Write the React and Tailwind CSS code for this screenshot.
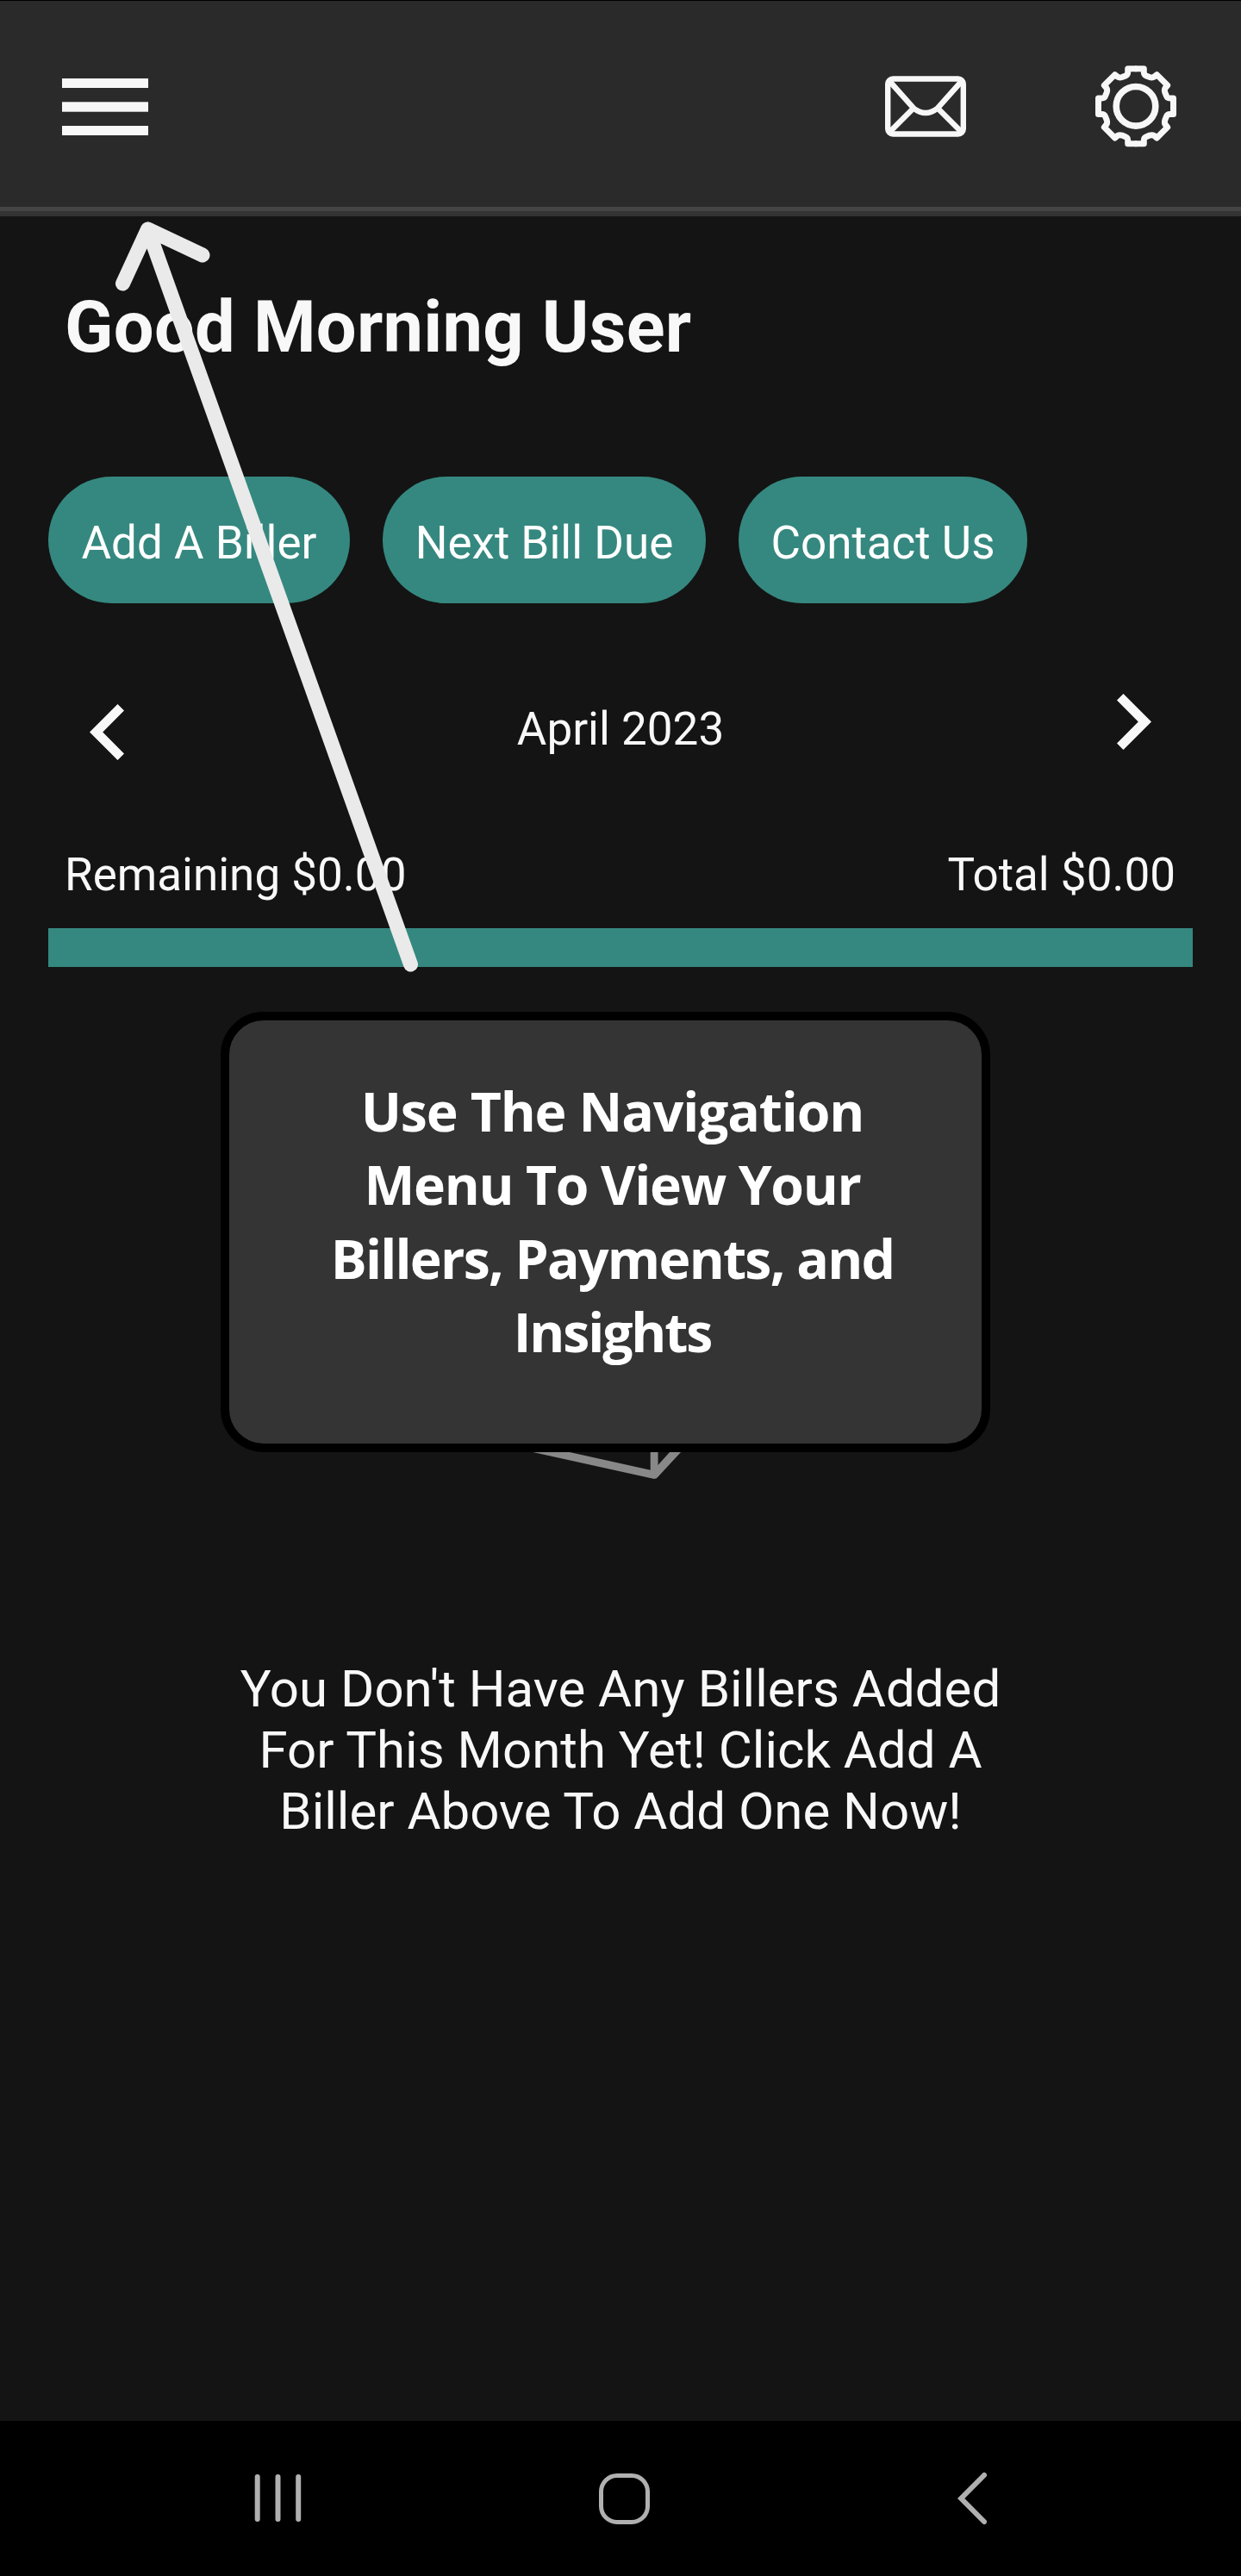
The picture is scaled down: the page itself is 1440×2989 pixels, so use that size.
import React from "react";

const quarterGear =
  "M-1 -43.5H9.3V-39.5C9.3 -37 10.5 -36 12 -35.4L16 -33.8Q19 -32.8 21 -34L24.3 -36.7L36.7 -24.3L34 -21Q32.8 -19 33.8 -16L35.4 -12C36 -10.5 37 -9.3 39.5 -9.3H43.5V1";

function MenuIcon() {
  return (
    <svg width="100" height="66" viewBox="0 0 100 66" fill="#f7f7f7">
      <rect width="100" height="11" />
      <rect y="27.3" width="100" height="11.4" />
      <rect y="55" width="100" height="11" />
    </svg>
  );
}

function MailIcon() {
  return (
    <svg width="94" height="71" viewBox="0 0 94 71" fill="none" stroke="#f7f7f7" strokeWidth="6.4">
      <rect x="3.2" y="3.5" width="87.6" height="64" rx="6" />
      <path d="M5 6L33 37.5Q47 48.500 61 37.5L89 6M5 65.500L33 37.5M89 65.500L61 37.5" />
    </svg>
  );
}

function GearIcon() {
  return (
    <svg width="96" height="96" viewBox="-48 -47.3 96 96" fill="none" stroke="#f7f7f7" strokeWidth="7" strokeLinejoin="round">
      <circle r="22.8" strokeWidth="7.6" />
      {[0, 90, 180, 270].map((a) => (
        <path key={a} d={quarterGear} transform={`rotate(${a})`} />
      ))}
    </svg>
  );
}

function Pill({ children, className }) {
  return (
    <button className={`h-[147px] shrink-0 rounded-full bg-[#35887f] pt-[8px] text-center text-[53px] whitespace-nowrap text-white ${className}`}>
      {children}
    </button>
  );
}

function PointerArrow() {
  return (
    <svg className="pointer-events-none absolute top-[240px] left-[120px]" width="380" height="900" viewBox="120 240 380 900" fill="none" stroke="#eaeaea" strokeWidth="17" strokeLinecap="round" strokeLinejoin="round">
      <path d="M142.500 329L171.500 266L235 296M171.500 266L476.500 1119" />
    </svg>
  );
}

export default function App() {
  return (
    <div className="relative flex h-[2989px] w-[1440px] flex-col overflow-hidden bg-[#141414] font-['Roboto',sans-serif] text-[#f8f8f8]">
      <header className="flex h-[251px] shrink-0 flex-col border-t border-black bg-[#2a2a2a]">
        <div className="flex h-[239px] items-center pt-[6px] pr-[74px] pl-[72px]">
          <MenuIcon />
          <div className="ml-auto flex items-center gap-[149px]">
            <MailIcon />
            <GearIcon />
          </div>
        </div>
        <div className="h-[5px] bg-[#444444]" />
        <div className="h-[6px] bg-[#333333]" />
      </header>

      <main className="flex flex-1 flex-col px-[56px]">
        <h1 className="mt-[79px] ml-[19px] text-[83px] leading-[100px] font-bold tracking-[0.25px] whitespace-nowrap">Good Morning User</h1>

        <div className="mt-[123px] flex gap-[38px]">
          <Pill className="w-[350px]">Add A Biller</Pill>
          <Pill className="w-[375px]">Next Bill Due</Pill>
          <Pill className="w-[335px]">Contact Us</Pill>
        </div>

        <div className="mt-[96px] flex h-[100px] items-center justify-between pr-[48px] pl-[48px]">
          <svg className="mt-[7px]" width="40" height="65" viewBox="0 0 40 65" fill="#f8f8f8">
            <path d="M32.500 0L40 7.500L15.200 32.500L40 57.500L32.500 65L0 32.500Z" />
          </svg>
          <span className="text-[53px] leading-[60px]">April 2023</span>
          <svg className="-mt-[17px]" width="40" height="65" viewBox="0 0 40 65" fill="#f8f8f8">
            <path d="M7.500 0L0 7.500L24.800 32.500L0 57.500L7.500 65L40 32.500Z" />
          </svg>
        </div>

        <div className="mt-[89px] flex justify-between pr-[20px] pl-[19px] text-[53px] leading-[60px]">
          <span>Remaining $0.00</span>
          <span>Total $0.00</span>
        </div>
        <div className="mt-[32px] h-[45px] bg-[#35887f]" />

        <section className="mt-[52px] ml-[200px] h-[511px] w-[893px] shrink-0 rounded-[50px] border-[10px] border-black bg-[#343434] pt-[62px] pl-[16px] text-center font-['Open_Sans',sans-serif] text-[62.5px] leading-[85.3px] font-bold whitespace-nowrap text-white">
          <p className="tracking-[-1.15px]">Use The Navigation</p>
          <p className="tracking-[-1.35px]">Menu To View Your</p>
          <p className="tracking-[-1.75px]">Billers, Payments, and</p>
          <p className="tracking-[-2.1px]">Insights</p>
        </section>
        <svg className="ml-[562px] shrink-0" width="172" height="31" viewBox="618 0 172 31" fill="#888888">
          <path d="M618.500 0H661L754.700 20.700V0H763.500V15L777 0H790L762 30.200L759 31Z" />
        </svg>

        <div className="mt-[208px] text-center text-[60px] leading-[71px] whitespace-nowrap">
          <p>You Don't Have Any Billers Added</p>
          <p>For This Month Yet! Click Add A</p>
          <p>Biller Above To Add One Now!</p>
        </div>
      </main>

      <footer className="flex h-[180px] shrink-0 items-center bg-black pl-[295px]">
        <svg width="55" height="58" viewBox="0 0 55 58" stroke="#b0b0b0" strokeWidth="6" strokeLinecap="round">
          <path d="M3.700 4V53M27.500 4V53M51.200 4V53" />
        </svg>
        <div className="ml-[345px] h-[59px] w-[59px] rounded-[21px] border-[5.500px] border-[#b0b0b0]" />
        <svg className="ml-[357px]" width="35" height="62" viewBox="0 0 35 62" fill="none" stroke="#b0b0b0" strokeWidth="6" strokeLinecap="round">
          <path d="M31 4L4.200 31L31 58" />
        </svg>
      </footer>

      <PointerArrow />
    </div>
  );
}
